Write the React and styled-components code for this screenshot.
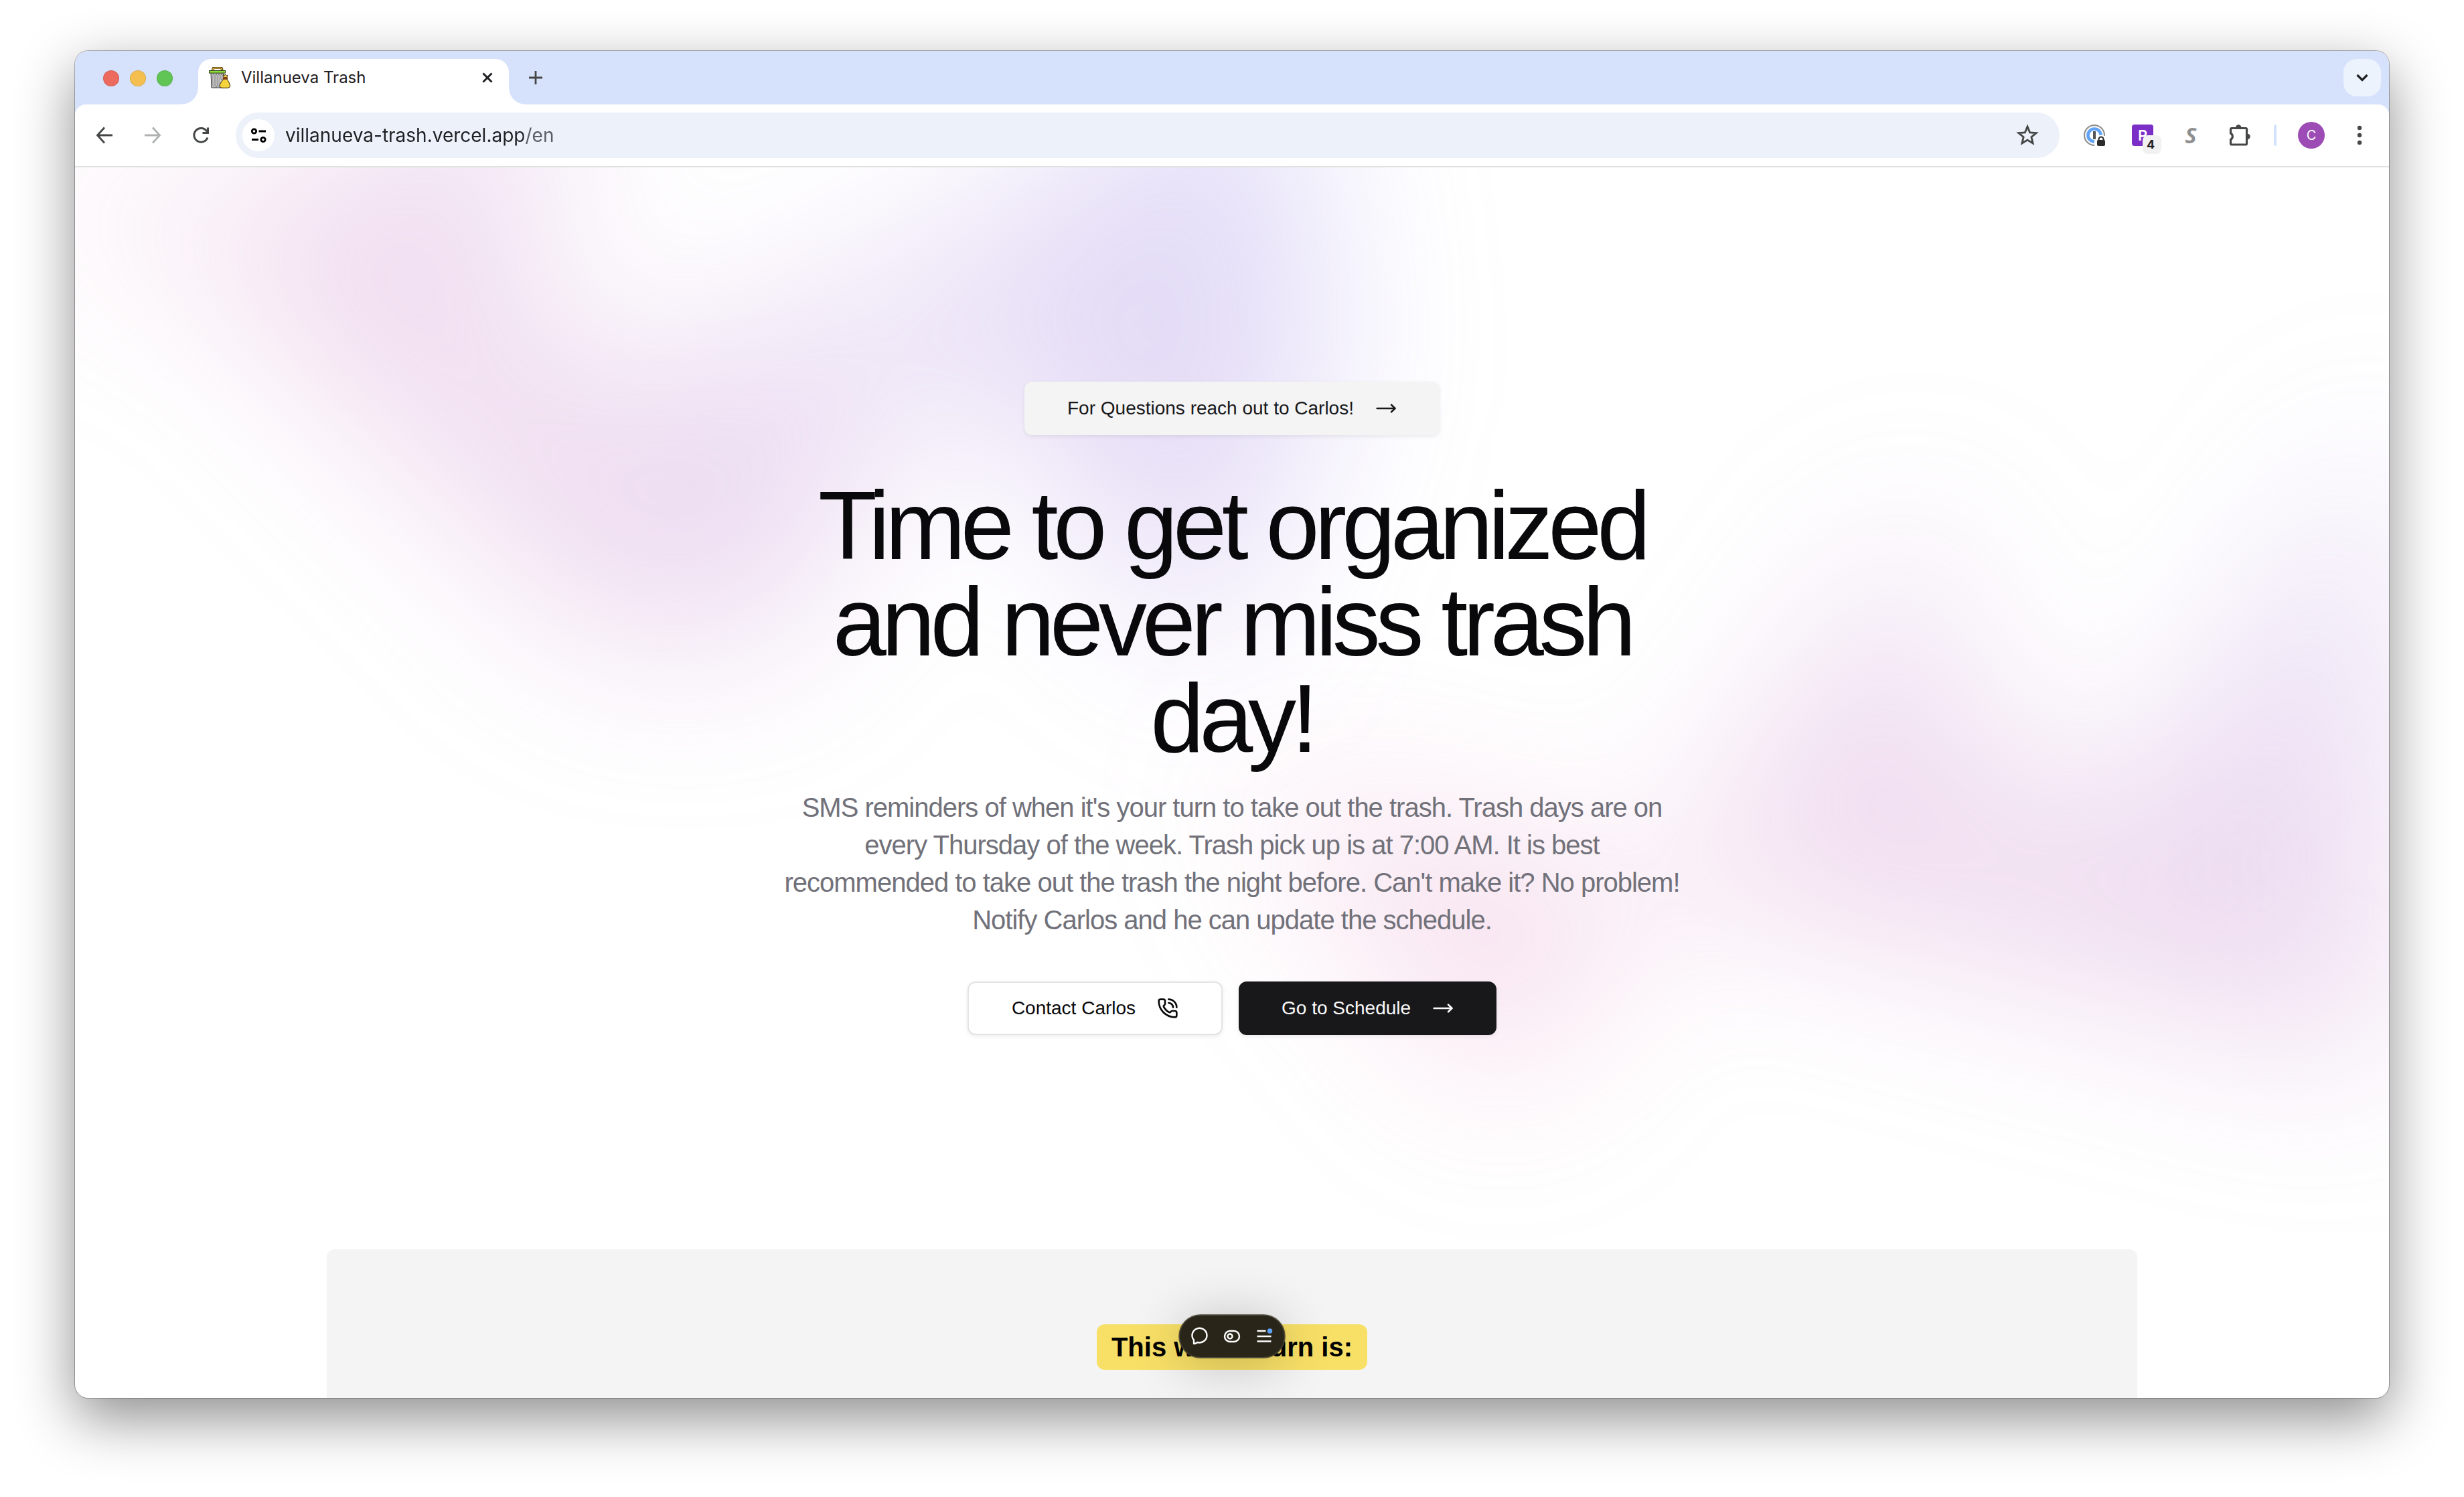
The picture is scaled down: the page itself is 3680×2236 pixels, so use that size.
import React from "react";
import styled, { createGlobalStyle } from "styled-components";
import { MoveRight, PhoneCall } from "lucide-react";

const uiFont = `Inter, Roboto, "Liberation Sans", sans-serif`;
const pageFont = `"Liberation Sans", Arial, sans-serif`;

const GlobalStyle = createGlobalStyle`
  *, *::before, *::after { box-sizing: border-box; }
  body { margin: 0; background: #fff; }
  button, input { font: inherit; color: inherit; margin: 0; padding: 0; border: 0; background: none; }
  h1, h2, p { margin: 0; }
`;

const Desktop = styled.div`
  display: flex;
  height: 100vh;
  padding: 76px 112px 148px;
  overflow: hidden;
`;

const Window = styled.div`
  position: relative;
  flex: 1;
  min-width: 0;
  display: flex;
  flex-direction: column;
  overflow: hidden;
  border-radius: 20px;
  background: #fff;
  box-shadow: 0 0 0 1px rgba(0, 0, 0, 0.28), 0 30px 86px rgba(0, 0, 0, 0.45);
`;

/* ---------- browser chrome ---------- */

const Chrome = styled.header`
  flex: none;
  background: #d6e1fc;
  font-family: ${uiFont};
`;

const TabStrip = styled.div`
  display: flex;
  height: 80px;
  padding: 12px 12px 0 42px;
`;

const TrafficLights = styled.div`
  display: flex;
  gap: 16px;
  padding-top: 17px;
  margin-right: 38px;
`;

const Light = styled.button`
  width: 24px;
  height: 24px;
  border-radius: 50%;
  background: ${(p) => p.$color};
  box-shadow: inset 0 0 0 1px rgba(0, 0, 0, 0.1);
`;

const Tab = styled.div`
  position: relative;
  display: flex;
  align-items: center;
  width: 464px;
  padding: 0 24px 12px 16px;
  border-radius: 20px 20px 0 0;
  background: #fff;

  &::before,
  &::after {
    content: "";
    position: absolute;
    bottom: 0;
    width: 24px;
    height: 24px;
  }
  &::before {
    right: 100%;
    background: radial-gradient(circle at 0 0, transparent 23px, #fff 24px);
  }
  &::after {
    left: 100%;
    background: radial-gradient(circle at 100% 0, transparent 23px, #fff 24px);
  }
`;

const TabTitle = styled.span`
  flex: 1;
  margin-left: 16px;
  font-size: 24px;
  line-height: 32px;
  color: #1f2023;
`;

const IconButton = styled.button`
  display: grid;
  place-items: center;
  width: ${(p) => p.$width || 32}px;
  height: ${(p) => p.$height || 56}px;
  color: ${(p) => p.$color || "#444746"};
`;

const NewTab = styled(IconButton)`
  margin-left: 24px;
`;

const TabSearch = styled(IconButton)`
  margin-left: auto;
  border-radius: 20px;
  background: #ecf3fd;
`;

const Toolbar = styled.div`
  display: flex;
  align-items: center;
  height: 94px;
  padding: 0 28px 0 16px;
  border-radius: 16px 16px 0 0;
  border-bottom: 2px solid #e0e2e0;
  background: #fff;
`;

const NavButtons = styled.div`
  display: flex;
  gap: 16px;
  margin-right: 24px;
`;

const Omnibox = styled.div`
  flex: 1;
  display: flex;
  align-items: center;
  gap: 16px;
  height: 68px;
  padding: 0 30px 0 10px;
  border-radius: 34px;
  background: #edf2fa;
`;

const SiteInfo = styled.button`
  display: grid;
  place-items: center;
  width: 48px;
  height: 48px;
  border-radius: 50%;
  background: #fff;
`;

const Address = styled.input`
  flex: 1;
  min-width: 0;
  height: 48px;
  outline: none;
  font-size: 28px;
  color: transparent;
  background: linear-gradient(90deg, #1f2023 356px, #5a5d62 356px);
  background-clip: text;
  -webkit-background-clip: text;
`;

const Extensions = styled.div`
  display: flex;
  align-items: center;
  gap: 40px;
  margin-left: 36px;
`;

const ExtensionP = styled.button`
  position: relative;
  width: 32px;
  height: 32px;
  border-radius: 4px;
  background: #7b2fc6;
  color: #fff;
  font-size: 22px;
  font-weight: 600;
  line-height: 28px;
  text-align: center;
`;

const Count = styled.span`
  position: absolute;
  left: 16px;
  top: 16px;
  width: 28px;
  height: 28px;
  padding-right: 4px;
  border-radius: 8px;
  background: #f1f1f1;
  color: #1f2023;
  font-size: 18px;
  font-weight: 700;
`;

const ExtensionS = styled.button`
  width: 32px;
  height: 32px;
  color: #8f8f8f;
  font-family: "Open Sans", sans-serif;
  font-size: 32px;
  font-style: italic;
  font-weight: 700;
  line-height: 32px;
`;

const ToolbarDivider = styled.span`
  width: 4px;
  height: 32px;
  margin: 0 32px 0 36px;
  border-radius: 2px;
  background: #d3e3fd;
`;

const Avatar = styled.button`
  width: 40px;
  height: 40px;
  margin-right: 36px;
  border-radius: 50%;
  background: #9c4cb4;
  color: #fff;
  font-size: 20px;
  line-height: 40px;
`;

/* ---------- page ---------- */

const Page = styled.main`
  position: relative;
  isolation: isolate;
  flex: 1;
  min-height: 0;
  overflow: hidden;
  font-family: ${pageFont};
  color: #09090b;
`;

const Glow = styled.div`
  position: absolute;
  left: 0;
  right: 0;
  top: ${(p) => p.$top}px;
  z-index: -1;
  overflow: hidden;
  filter: blur(128px);
  pointer-events: none;
`;

const GlowShape = styled.div`
  position: relative;
  left: calc(50% + ${(p) => p.$shift}px);
  width: 2310px;
  aspect-ratio: 1155 / 678;
  transform: translateX(-50%) rotate(${(p) => p.$turn}deg);
  background: linear-gradient(to top right, #ee88b4, #8c86ee);
  opacity: 0.3;
  clip-path: polygon(
    74.1% 44.1%, 100% 61.6%, 97.5% 26.9%, 85.5% 0.1%, 80.7% 2%, 72.5% 32.5%,
    60.2% 62.4%, 52.4% 68.1%, 47.5% 58.3%, 45.2% 34.5%, 27.5% 76.7%, 0.1% 64.9%,
    17.9% 100%, 27.6% 76.8%, 76.1% 97.7%, 74.1% 44.1%
  );
`;

const Hero = styled.section`
  display: flex;
  flex-direction: column;
  align-items: center;
  padding: 320px 40px;
  text-align: center;
`;

const ActionLink = styled.a`
  display: inline-flex;
  align-items: center;
  gap: 32px;
  height: 80px;
  padding: 0 64px;
  border: ${(p) => (p.$kind === "outline" ? "2px solid #e4e4e7" : "0")};
  border-radius: 12px;
  background: ${(p) => ({ outline: "#fff", dark: "#18181b", soft: "#f4f4f4" })[p.$kind]};
  color: ${(p) => ({ outline: "#09090b", dark: "#fafafa", soft: "#18181b" })[p.$kind]};
  box-shadow: 0 2px 6px rgba(0, 0, 0, 0.08);
  font-size: 28px;
  line-height: 40px;
  text-decoration: none;
  white-space: nowrap;
`;

const Headline = styled.h1`
  max-width: 1344px;
  margin-top: 64px;
  font-size: 144px;
  font-weight: 400;
  line-height: 144px;
  letter-spacing: -0.05em;
`;

const Lead = styled.p`
  max-width: 1344px;
  margin-top: 32px;
  font-size: 40px;
  line-height: 56px;
  letter-spacing: -0.025em;
  color: #71717a;
`;

const Actions = styled.div`
  display: flex;
  gap: 24px;
  margin-top: 64px;
`;

const TurnPanel = styled.section`
  display: flex;
  justify-content: center;
  align-items: flex-start;
  max-width: 2704px;
  min-height: 400px;
  margin: 0 auto;
  padding: 112px 40px;
  border-radius: 12px;
  background: #f4f4f4;
`;

const TurnTitle = styled.h2`
  padding: 6px 22px;
  border-radius: 12px;
  background: #f8e067;
  color: #000;
  font-size: 40px;
  font-weight: 700;
  line-height: 56px;
`;

const DevBar = styled.div`
  position: absolute;
  left: 50%;
  bottom: 60px;
  display: flex;
  align-items: center;
  justify-content: center;
  gap: 16px;
  width: 158px;
  height: 64px;
  border-radius: 32px;
  background: #292518;
  transform: translateX(-50%);
  box-shadow: inset 0 0 0 1px rgba(255, 255, 255, 0.16), 0 0 0 1px rgba(60, 56, 40, 0.7),
    0 8px 80px rgba(0, 0, 0, 0.24);
`;

/* ---------- icons ---------- */

const Line = ({ size = 32, box = 32, w = 3, children, ...rest }) => (
  <svg width={size} height={size} viewBox={`0 0 ${box} ${box}`} fill="none" stroke="currentColor" strokeWidth={w} aria-hidden="true" {...rest}>
    {children}
  </svg>
);

const TrashFavicon = () => (
  <svg width="32" height="32" viewBox="0 0 32 32" aria-hidden="true">
    <path d="M6 6V3.500Q6 1.200 8.500 1.200H17Q19.500 1.200 19.500 3.500V6" fill="none" stroke="#3b2a10" strokeWidth="3.600" />
    <path d="M6 6V3.500Q6 1.600 8.500 1.600H17Q19.500 1.600 19.500 3.500V6" fill="none" stroke="#e5b93c" strokeWidth="1.800" />
    <path d="M3 9H22.500V31H4Z" fill="#d8d8d8" stroke="#222" strokeWidth="1" />
    <path d="M7 12V28M11 12V29M15 12V28M19 12V18" stroke="#222" strokeWidth="2.600" strokeLinecap="round" />
    <path d="M7 12V28M11 12V29M15 12V28M19 12V18" stroke="#fff" strokeWidth="1.400" strokeLinecap="round" />
    <rect x="0.500" y="5.500" width="24" height="3.600" fill="#8fdc3e" stroke="#2b3b12" strokeWidth="1" />
    <path d="M21 11.500L23 13L24.500 11L26 13L28 12L27 15.500H22Z" fill="#f5d23c" stroke="#2b2208" strokeWidth="0.800" />
    <path d="M22 18Q16 25 16 28Q16 31.300 19.500 31.300H28.500Q31.500 31.300 31.500 28Q31.500 25 27 18Z" fill="#f7d33d" stroke="#2b2208" strokeWidth="1" />
    <rect x="21" y="15.300" width="7" height="3" fill="#8a3b12" />
  </svg>
);

const CloseIcon = () => <Line size={16} box={16}><path d="M1.500 1.500L14.500 14.500M14.500 1.500L1.500 14.500" /></Line>;
const PlusIcon = () => <Line size={20} box={20} w={2.8}><path d="M10 0V20M0 10H20" /></Line>;
const ChevronIcon = () => <Line size={20} box={20} w={3.2}><path d="M2.500 6L10 13.500L17.500 6" /></Line>;
const BackIcon = () => <Line w={2.8}><path d="M28 16H6M16 4.500L5.500 16L16 27.500" /></Line>;
const ForwardIcon = () => <Line w={2.8}><path d="M4 16H26M16 4.500L26.500 16L16 27.500" /></Line>;
const ReloadIcon = () => (
  <Line w={3}>
    <path d="M26 19.500A10.400 10.400 0 1 1 24.500 9.500L26 11.500" />
    <path d="M26.500 4.500V12.500H18.500" />
  </Line>
);
const TuneIcon = () => (
  <Line size={28} box={28} w={2.8}>
    <circle cx="7.500" cy="8" r="3.200" /><path d="M14.500 8H25M4 20.500H14" /><circle cx="21" cy="20.500" r="3.200" />
  </Line>
);
const StarIcon = () => (
  <Line size={36} box={24} w={1.9}>
    <path d="M12 3.300L14.400 9.200L20.800 9.700L15.900 13.800L17.400 20L12 16.700L6.600 20L8.100 13.800L3.200 9.700L9.600 9.200Z" />
  </Line>
);
const OnePasswordIcon = () => (
  <svg width="32" height="32" viewBox="0 0 32 32" aria-hidden="true">
    <circle cx="16" cy="16" r="15" fill="#f5f5f5" stroke="#8b8b8b" strokeWidth="2" />
    <circle cx="16" cy="16" r="9.500" fill="#fff" stroke="#61a3f7" strokeWidth="4.600" />
    <rect x="14" y="10" width="4" height="12" rx="0.500" fill="#555" />
    <path d="M16 32V22Q17 17 25 15.500L32 17V32Z" fill="#fff" />
    <rect x="14" y="10" width="4" height="12" rx="0.500" fill="#555" />
    <rect x="20" y="23" width="12" height="9" rx="2" fill="#2c2c2c" />
    <path d="M22.500 24V22A3.500 3.500 0 0 1 29.500 22V24" fill="none" stroke="#2c2c2c" strokeWidth="2.200" />
  </svg>
);
const PuzzleIcon = () => (
  <svg width="34" height="32" viewBox="0 0 34 32" aria-hidden="true">
    <path d="M5 5.500H26Q27.500 5.500 27.500 7V28.500Q27.500 30 26 30H5Q3.500 30 3.500 28.500V22.500A5.400 5.400 0 0 0 3.500 13V7Q3.500 5.500 5 5.500Z" fill="none" stroke="#444746" strokeWidth="3.200" />
    <path d="M11 4.500A4.200 4.200 0 0 1 19.400 4.500ZM28.500 13.800A4.200 4.200 0 0 1 28.500 22.200Z" fill="#444746" />
  </svg>
);
const DotsIcon = () => (
  <svg width="8" height="32" viewBox="0 0 8 32" fill="#444746" aria-hidden="true">
    <circle cx="4" cy="5" r="3.200" /><circle cx="4" cy="16" r="3.200" /><circle cx="4" cy="27" r="3.200" />
  </svg>
);
const CommentIcon = () => (
  <Line w={2.4}><path d="M7 27V21.500A11 10.800 0 1 1 12.500 25Q10 27 7 27Z" strokeLinejoin="round" /></Line>
);
const EyeIcon = () => (
  <Line w={2.4}><rect x="5" y="8" width="22" height="16" rx="8" /><circle cx="13" cy="16" r="3.500" /></Line>
);
const MenuIcon = () => (
  <Line w={2.4}>
    <path d="M5.500 8H18.500M5.500 16H26.500M5.500 23.500H26.500" />
    <circle cx="24.500" cy="8" r="3.800" fill="#5ea2f5" stroke="none" />
  </Line>
);

export default function App() {
  return (
    <Desktop>
      <GlobalStyle />
      <Window>
        <Chrome>
          <TabStrip>
            <TrafficLights>
              <Light $color="#ed6a5f" aria-label="Close window" />
              <Light $color="#f5bf4f" aria-label="Minimize window" />
              <Light $color="#61c555" aria-label="Zoom window" />
            </TrafficLights>
            <Tab>
              <TrashFavicon />
              <TabTitle>Villanueva Trash</TabTitle>
              <IconButton $color="#1f2023" $width={16} $height={32} aria-label="Close tab"><CloseIcon /></IconButton>
            </Tab>
            <NewTab aria-label="New tab"><PlusIcon /></NewTab>
            <TabSearch $width={56} $color="#1f2023" aria-label="Search tabs"><ChevronIcon /></TabSearch>
          </TabStrip>
          <Toolbar>
            <NavButtons>
              <IconButton $width={56} aria-label="Back"><BackIcon /></IconButton>
              <IconButton $width={56} $color="#b0b1b1" aria-label="Forward"><ForwardIcon /></IconButton>
              <IconButton $width={56} aria-label="Reload"><ReloadIcon /></IconButton>
            </NavButtons>
            <Omnibox>
              <SiteInfo aria-label="View site information"><TuneIcon /></SiteInfo>
              <Address type="text" aria-label="Address" defaultValue="villanueva-trash.vercel.app/en" />
              <IconButton $width={36} $height={48} aria-label="Bookmark this tab"><StarIcon /></IconButton>
            </Omnibox>
            <Extensions>
              <IconButton $height={32} aria-label="Password manager"><OnePasswordIcon /></IconButton>
              <ExtensionP>P<Count>4</Count></ExtensionP>
              <ExtensionS>S</ExtensionS>
              <IconButton $height={32} aria-label="Extensions"><PuzzleIcon /></IconButton>
            </Extensions>
            <ToolbarDivider />
            <Avatar>C</Avatar>
            <IconButton $height={48} aria-label="Menu"><DotsIcon /></IconButton>
          </Toolbar>
        </Chrome>

        <Page>
          <Glow $top={-640}><GlowShape $shift={-960} $turn={30} /></Glow>
          <Glow $top={32}><GlowShape $shift={1152} $turn={0} /></Glow>

          <Hero>
            <ActionLink $kind="soft" href="#contact">
              For Questions reach out to Carlos! <MoveRight size={32} />
            </ActionLink>
            <Headline>Time to get organized and never miss trash day!</Headline>
            <Lead>
              SMS reminders of when it's your turn to take out the trash. Trash days are on every Thursday of the
              week. Trash pick up is at 7:00 AM. It is best recommended to take out the trash the night before.
              Can't make it? No problem! Notify Carlos and he can update the schedule.
            </Lead>
            <Actions>
              <ActionLink $kind="outline" href="#contact">Contact Carlos <PhoneCall size={32} /></ActionLink>
              <ActionLink $kind="dark" href="#schedule">Go to Schedule <MoveRight size={32} /></ActionLink>
            </Actions>
          </Hero>
          <TurnPanel id="schedule">
            <TurnTitle>This weeks turn is:</TurnTitle>
          </TurnPanel>

          <DevBar>
            <IconButton $height={32} $color="#fff" aria-label="Comment"><CommentIcon /></IconButton>
            <IconButton $height={32} $color="#fff" aria-label="Draft mode"><EyeIcon /></IconButton>
            <IconButton $height={32} $color="#fff" aria-label="Toolbar menu"><MenuIcon /></IconButton>
          </DevBar>
        </Page>
      </Window>
    </Desktop>
  );
}
